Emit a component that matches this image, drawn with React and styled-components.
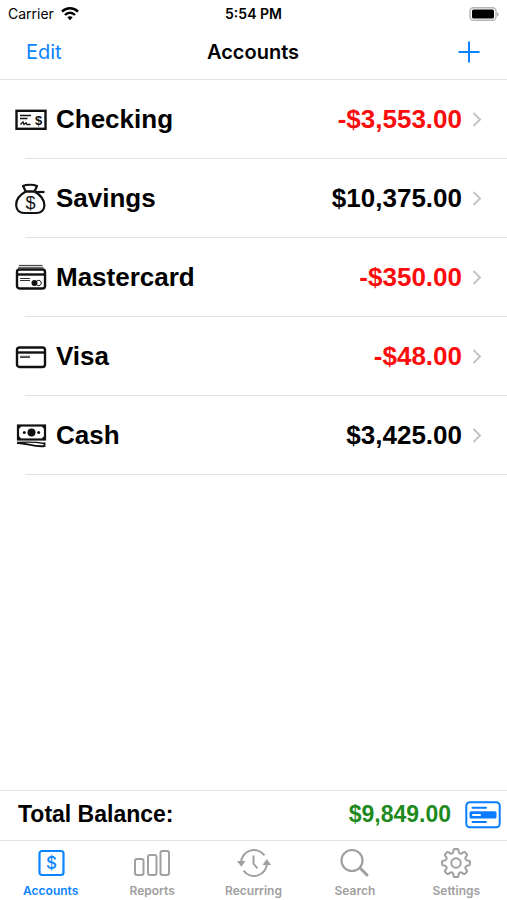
import React, { useState } from "react";
import styled, { createGlobalStyle } from "styled-components";

const accounts = [
  { name: "Checking", balance: -3553, icon: CheckIcon },
  { name: "Savings", balance: 10375, icon: BagIcon },
  { name: "Mastercard", balance: -350, icon: CardsIcon },
  { name: "Visa", balance: -48, icon: CardIcon },
  { name: "Cash", balance: 3425, icon: CashIcon },
];

const tabs = [
  { name: "Accounts", icon: AccountsIcon },
  { name: "Reports", icon: ReportsIcon },
  { name: "Recurring", icon: RecurringIcon },
  { name: "Search", icon: SearchIcon },
  { name: "Settings", icon: SettingsIcon },
];

const formatMoney = (value) =>
  value.toLocaleString("en-US", { style: "currency", currency: "USD" });

const App = () => {
  const [active, setActive] = useState("Accounts");
  const total = accounts.reduce((sum, account) => sum + account.balance, 0);

  return (
    <Screen>
      <GlobalStyle />
      <StatusBar>
        <Carrier>
          Carrier
          <WifiIcon />
        </Carrier>
        <Clock>5:54 PM</Clock>
        <BatteryIcon />
      </StatusBar>
      <NavBar>
        <NavButton>Edit</NavButton>
        <Title>Accounts</Title>
        <NavButton aria-label="Add account" $end>
          <PlusIcon />
        </NavButton>
      </NavBar>
      <AccountList>
        {accounts.map(({ name, balance, icon: Icon }) => (
          <li key={name}>
            <AccountRow href={`#${name.toLowerCase()}`}>
              <Icon />
              <AccountName>{name}</AccountName>
              <Balance $negative={balance < 0}>{formatMoney(balance)}</Balance>
              <ChevronIcon />
            </AccountRow>
          </li>
        ))}
      </AccountList>
      <TotalBar>
        <TotalLabel>Total Balance:</TotalLabel>
        <TotalValue>{formatMoney(total)}</TotalValue>
        <DetailButton aria-label="Balance details">
          <DetailIcon />
        </DetailButton>
      </TotalBar>
      <TabBar>
        {tabs.map(({ name, icon: Icon }) => (
          <Tab key={name} $active={name === active} onClick={() => setActive(name)}>
            <Icon />
            {name}
          </Tab>
        ))}
      </TabBar>
    </Screen>
  );
};

function WifiIcon() {
  return (
    <svg width="18" height="14" viewBox="0 0 18 14" fill="none" stroke="#000" strokeWidth="2.5">
      <path d="M1 4.700C5.500 .2 12.500 .2 17 4.700" />
      <path d="M4 8C6.800 5.100 11.200 5.100 14 8" />
      <path d="M9 13.200L6.300 10.300C7.900 8.900 10.100 8.900 11.700 10.300Z" fill="#000" stroke="none" />
    </svg>
  );
}

function BatteryIcon() {
  return (
    <svg width="30" height="14" viewBox="0 0 30 14">
      <rect x="1" y="0.700" width="26" height="12.600" rx="3.500" fill="#fff" stroke="#b4b4b4" strokeWidth="1.400" />
      <rect x="3" y="2.500" width="22" height="9" rx="1.500" fill="#000" />
      <path d="M28 5V9.500Q29.600 8.700 29.600 7.200Q29.600 5.700 28 5Z" fill="#aaa" />
    </svg>
  );
}

function PlusIcon() {
  return (
    <svg width="22" height="22" viewBox="0 0 22 22" stroke="currentColor" strokeWidth="2">
      <path d="M11 0.500V21.500M0.500 11H21.500" />
    </svg>
  );
}

function ChevronIcon() {
  return (
    <svg width="10" height="16" viewBox="0 0 10 16" fill="none" stroke="#c4c4c6" strokeWidth="2">
      <path d="M1.500 1L8 7.500L1.500 14" />
    </svg>
  );
}

function CheckIcon() {
  return (
    <svg width="32" height="32" viewBox="0 0 32 32" fill="none" stroke="#111" strokeWidth="1.300">
      <rect x="1.500" y="6.800" width="29" height="18" strokeWidth="2.400" />
      <path d="M5 11.500H16M5 14.500H12.500" />
      <path d="M5.500 20.500L8 18L9 20.500L11 18.800L12 20.500H15.500" />
      <text x="23.500" y="20.500" textAnchor="middle" fontFamily="Liberation Sans, sans-serif" fontSize="13" fontWeight="700" fill="#111" stroke="none">$</text>
    </svg>
  );
}

function BagIcon() {
  return (
    <svg width="32" height="32" viewBox="0 0 32 32" fill="none" stroke="#111" strokeWidth="2.200" strokeLinejoin="round">
      <path d="M10.800 8.500C2.500 13 1 19 1.200 22.500C1.500 27.500 5 30 9 30H21.500C26 30 29.300 27 29.400 22.500C29.400 18 26.500 12.500 19.500 8.500Z" />
      <path d="M10.800 8.500L8 3C11.500 1.300 18.500 1.300 22 3L19.500 8.500Z" />
      <path d="M19.500 9H29.500" strokeWidth="2.200" />
      <text x="15.400" y="25.500" textAnchor="middle" fontFamily="Liberation Sans, sans-serif" fontSize="18" fontWeight="400" fill="#111" stroke="none">$</text>
    </svg>
  );
}

function CardsIcon() {
  return (
    <svg width="32" height="32" viewBox="0 0 32 32" fill="none" stroke="#111">
      <path d="M4 3.500H27.500" strokeWidth="1.200" stroke="#444" />
      <path d="M3 5.500H28.500" strokeWidth="1.200" stroke="#666" />
      <rect x="2" y="7.500" width="28" height="19" rx="2.500" strokeWidth="2.400" />
      <path d="M2 12.500H30" strokeWidth="2.400" />
      <path d="M5 16.500H15M5 18.500H15" strokeWidth="1" stroke="#333" />
      <circle cx="19.500" cy="21" r="3" fill="#111" stroke="none" />
      <path d="M22 18.800A2.700 2.700 0 1 1 22 23.200" strokeWidth="1" />
    </svg>
  );
}

function CardIcon() {
  return (
    <svg width="32" height="32" viewBox="0 0 32 32" fill="none" stroke="#111" strokeWidth="2.400">
      <rect x="2" y="6.500" width="28" height="19.500" rx="2.500" />
      <path d="M2 11.500H30" />
      <path d="M5 15.300H15M5 16.500H15" strokeWidth="1" stroke="#444" />
    </svg>
  );
}

function CashIcon() {
  return (
    <svg width="32" height="32" viewBox="0 0 32 32">
      <rect x="3" y="5.500" width="27" height="14" fill="none" stroke="#111" strokeWidth="2.200" />
      <path d="M3 6H6Q5.800 8.500 3 9ZM30 6H27Q27.200 8.500 30 9ZM3 19H6Q5.800 16.500 3 16ZM30 19H27Q27.200 16.500 30 16Z" fill="#111" />
      <circle cx="16.500" cy="12.500" r="4" fill="#111" />
      <circle cx="9.300" cy="12.500" r="1.500" fill="#111" />
      <circle cx="23.700" cy="12.500" r="1.500" fill="#111" />
      <path d="M2 23C11 22.700 20 27.500 29.500 26V22.500" fill="none" stroke="#111" strokeWidth="1.800" />
      <path d="M2 22.500Q18 21.500 29.500 23.500" fill="none" stroke="#111" strokeWidth="1.300" />
    </svg>
  );
}

function DetailIcon() {
  return (
    <svg width="36" height="28" viewBox="0 0 36 28" fill="none" stroke="currentColor" strokeWidth="2">
      <rect x="1.300" y="1.300" width="33.400" height="25" rx="3.500" />
      <path d="M7.500 6.800H21M7.500 21H21" strokeLinecap="round" />
      <rect x="4.500" y="10.200" width="27" height="7.300" rx="1.500" fill="currentColor" stroke="none" />
      <path d="M8 13.900H15" stroke="#fff" strokeLinecap="round" />
    </svg>
  );
}

function AccountsIcon() {
  return (
    <svg width="38" height="32" viewBox="0 0 38 32">
      <rect x="7.500" y="4" width="24" height="24" rx="2.500" fill="none" stroke="currentColor" strokeWidth="2.200" />
      <text x="19.500" y="22" textAnchor="middle" fontFamily="Inter, sans-serif" fontSize="17" fontWeight="500" fill="currentColor">$</text>
    </svg>
  );
}

function ReportsIcon() {
  return (
    <svg width="38" height="32" viewBox="0 0 38 32" fill="none" stroke="currentColor" strokeWidth="2">
      <rect x="2" y="12" width="8.500" height="16" rx="2" />
      <rect x="15" y="8" width="8.500" height="20" rx="2" />
      <rect x="27.500" y="4" width="8.500" height="24" rx="2" />
    </svg>
  );
}

function RecurringIcon() {
  return (
    <svg width="38" height="32" viewBox="0 0 38 32" fill="none" stroke="currentColor" strokeWidth="2">
      <path d="M6 16A13 13 0 0 1 29.500 8.300" />
      <path d="M32 16A13 13 0 0 1 8.500 23.700" />
      <path d="M2 14H10.500L6.300 19.800Z" fill="currentColor" stroke="none" />
      <path d="M27.500 18H36.200L31.800 12Z" fill="currentColor" stroke="none" />
      <path d="M18.500 8.500V16.500L22.500 21.500" />
    </svg>
  );
}

function SearchIcon() {
  return (
    <svg width="38" height="32" viewBox="0 0 38 32" fill="none" stroke="currentColor">
      <circle cx="16" cy="13.500" r="10.500" strokeWidth="2.200" />
      <path d="M24 21L31 28" strokeWidth="3" strokeLinecap="round" />
    </svg>
  );
}

// eight rounded teeth around a hub
function SettingsIcon() {
  const teeth = [0, 45, 90, 135, 180, 225, 270, 315];
  const point = (radius, degrees) => {
    const angle = (degrees * Math.PI) / 180;
    return `${19 + radius * Math.sin(angle)} ${16 - radius * Math.cos(angle)}`;
  };
  const outline = teeth
    .map((t) => `${point(11.5, t - 13)} Q${point(14, t - 11)} ${point(14, t - 6)} L${point(14, t + 6)} Q${point(14, t + 11)} ${point(11.5, t + 13)} Q${point(9.2, t + 22.5)} ${point(11.5, t + 32)}`)
    .join(" L");
  return (
    <svg width="38" height="32" viewBox="0 0 38 32" fill="none" stroke="currentColor" strokeWidth="2" strokeLinejoin="round">
      <path d={`M${outline}Z`} />
      <circle cx="19" cy="16" r="4.700" />
    </svg>
  );
}

const GlobalStyle = createGlobalStyle`
  * {
    box-sizing: border-box;
  }
  body {
    margin: 0;
    background: #fff;
    color: #000;
    font-family: Inter, sans-serif;
  }
  button {
    padding: 0;
    border: 0;
    background: none;
    font-family: inherit;
    cursor: pointer;
  }
  svg {
    display: block;
    flex: none;
  }
`;
const Screen = styled.div`
  display: flex;
  flex-direction: column;
  min-height: 100vh;
`;
const StatusBar = styled.div`
  display: grid;
  grid-template-columns: 1fr auto 1fr;
  align-items: center;
  height: 27px;
  padding: 0 8px;
  font-size: 14px;
  > svg {
    justify-self: end;
  }
`;
const Carrier = styled.div`
  display: flex;
  align-items: center;
  gap: 7px;
`;
const Clock = styled.time`
  font-weight: 600;
`;
const NavBar = styled.header`
  display: grid;
  grid-template-columns: 1fr auto 1fr;
  align-items: center;
  height: 53px;
  padding: 0 27px 2px 26px;
  border-bottom: 1px solid #e2e2e2;
`;
const NavButton = styled.button`
  justify-self: ${(props) => (props.$end ? "end" : "start")};
  color: #0a84ff;
  font-size: 20px;
`;
const Title = styled.h1`
  margin: 0;
  font-size: 20px;
  font-weight: 600;
`;
const AccountList = styled.ul`
  flex: 1;
  margin: 0;
  padding: 0;
  list-style: none;
  font-family: "Liberation Sans", Arial, sans-serif;
  li {
    padding-left: 15px;
  }
`;
const AccountRow = styled.a`
  display: flex;
  align-items: center;
  height: 79px;
  padding-right: 25px;
  background: linear-gradient(#e2e2e2, #e2e2e2) 10px 100% / 100% 1px no-repeat;
  color: inherit;
  font-size: 26px;
  font-weight: 700;
  text-decoration: none;
`;
const AccountName = styled.span`
  flex: 1;
  margin-left: 9px;
`;
const Balance = styled.span`
  margin-right: 10px;
  color: ${(props) => (props.$negative ? "#fb0d0d" : "#000")};
`;
const TotalBar = styled.section`
  display: flex;
  align-items: center;
  height: 50px;
  padding: 0 6px 2px 18px;
  border-top: 1px solid #e2e2e2;
  font-family: "Liberation Sans", Arial, sans-serif;
  font-size: 23px;
  font-weight: 700;
`;
const TotalLabel = styled.span`
  flex: 1;
`;
const TotalValue = styled.span`
  margin-right: 14px;
  color: #1e8a1e;
`;
const DetailButton = styled.button`
  color: #0a7cff;
`;
const TabBar = styled.nav`
  display: flex;
  height: 60px;
  border-top: 1px solid #e2e2e2;
`;
const Tab = styled.button`
  display: flex;
  flex: 1;
  flex-direction: column;
  align-items: center;
  gap: 4px;
  padding-top: 6px;
  color: ${(props) => (props.$active ? "#0a84ff" : "#a0a0a0")};
  font-size: 12px;
  font-weight: 600;
`;

export default App;
